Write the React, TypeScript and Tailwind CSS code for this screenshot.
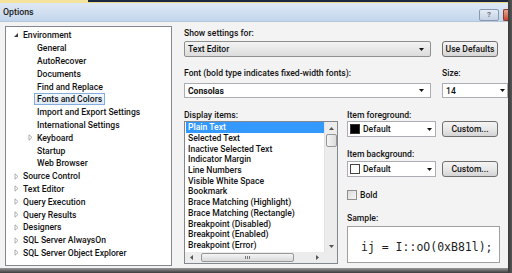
import React from "react";

type TreeItem = { t: string; lvl: number; exp?: "open" | "closed"; sel?: boolean };

const tree: TreeItem[] = [
  { t: "Environment", lvl: 0, exp: "open" },
  { t: "General", lvl: 1 },
  { t: "AutoRecover", lvl: 1 },
  { t: "Documents", lvl: 1 },
  { t: "Find and Replace", lvl: 1 },
  { t: "Fonts and Colors", lvl: 1, sel: true },
  { t: "Import and Export Settings", lvl: 1 },
  { t: "International Settings", lvl: 1 },
  { t: "Keyboard", lvl: 1, exp: "closed" },
  { t: "Startup", lvl: 1 },
  { t: "Web Browser", lvl: 1 },
  { t: "Source Control", lvl: 0, exp: "closed" },
  { t: "Text Editor", lvl: 0, exp: "closed" },
  { t: "Query Execution", lvl: 0, exp: "closed" },
  { t: "Query Results", lvl: 0, exp: "closed" },
  { t: "Designers", lvl: 0, exp: "closed" },
  { t: "SQL Server AlwaysOn", lvl: 0, exp: "closed" },
  { t: "SQL Server Object Explorer", lvl: 0, exp: "closed" },
];

const displayItems = [
  "Plain Text",
  "Selected Text",
  "Inactive Selected Text",
  "Indicator Margin",
  "Line Numbers",
  "Visible White Space",
  "Bookmark",
  "Brace Matching (Highlight)",
  "Brace Matching (Rectangle)",
  "Breakpoint (Disabled)",
  "Breakpoint (Enabled)",
  "Breakpoint (Error)",
];

function Arrow() {
  return (
    <svg width="5" height="3" viewBox="0 0 5 3" className="shrink-0">
      <path d="M0 0h5L2.5 3z" fill="#111" />
    </svg>
  );
}

function Twisty({ exp }: { exp?: "open" | "closed" }) {
  return (
    <span className="w-[8px] h-[8px] flex items-center justify-center shrink-0">
      {exp === "open" && (
        <svg width="6" height="6" viewBox="0 0 6 6">
          <path d="M5 1V5H1z" fill="#3a3a3a" />
        </svg>
      )}
      {exp === "closed" && (
        <svg width="5" height="7" viewBox="0 0 5 7">
          <path d="M1 0.8L4 3.5L1 6.2z" fill="#fff" stroke="#9a9a9a" strokeWidth="0.8" />
        </svg>
      )}
    </span>
  );
}

function Button({ label }: { label: string }) {
  return (
    <div className="w-[56px] h-[16px] flex items-center justify-center border border-[#707070] rounded-[3px] bg-gradient-to-b from-[#f4f4f4] via-[#e8e8e8] to-[#d4d4d4] text-[#111]">
      {label}
    </div>
  );
}

export default function App() {
  return (
    <div className="w-[512px] h-[273px] overflow-hidden flex bg-[#f3f3f3] text-[8.6px] leading-[10px] font-medium text-[#111] [font-family:Roboto,'Noto_Sans',sans-serif]">
      <div className="w-[508px] flex flex-col">
        {/* strip of whatever sits behind the dialog */}
        <div className="h-[3px] flex">
          <div className="w-[88px] bg-[#f4e39c]" />
          <div className="flex-1 bg-[#1c2744] border-b border-[#e8d98a]" />
        </div>

        {/* title bar */}
        <div className="h-[19px] flex items-center pl-[3px] bg-gradient-to-b from-[#dfe9f5] to-[#c3d6ec] border-b border-[#b5c6da]">
          <span className="text-[8.8px] text-[#1a1a1a]">Options</span>
          <div className="ml-auto flex items-center gap-[4px] mt-[6px]">
            <div className="w-[20px] h-[12px] flex items-center justify-center border border-[#8798b2] rounded-[2px] bg-gradient-to-b from-[#e4ecf5] to-[#c5d3e4] text-[8px] font-bold text-[#6e7480]">
              ?
            </div>
            <div className="w-[5px] h-[12px] border border-r-0 border-[#8a3a2a] rounded-l-[2px] bg-gradient-to-b from-[#e9a596] to-[#c4462e]" />
          </div>
        </div>

        {/* body */}
        <div className="flex-1 flex items-start pl-[5px]">
          {/* tree */}
          <div className="mt-[4px] w-[172px] h-[240px] border border-[#828790] bg-white pt-[2px] overflow-hidden">
            {tree.map((it) => (
              <div
                key={it.t}
                className={`h-[12.8px] flex items-center ${it.lvl === 0 ? "pl-[6px]" : "pl-[20px]"}`}
              >
                <Twisty exp={it.exp} />
                <span
                  className={`px-[2px] h-[12px] flex items-center border whitespace-nowrap ${
                    it.sel ? "border-[#84acdd] bg-gradient-to-b from-[#f2f8fe] to-[#dde9f8]" : "border-transparent"
                  }`}
                >
                  {it.t}
                </span>
              </div>
            ))}
          </div>

          {/* settings */}
          <div className="ml-[12px] pt-[6px] flex flex-col">
            <div className="h-[10px]">Show settings for:</div>
            <div className="mt-[3px] h-[16px] flex gap-[11px]">
              <div className="w-[247px] h-full flex items-center justify-between pl-[3px] pr-[6px] border border-[#8e8f8f] rounded-[2px] bg-gradient-to-b from-[#f3f3f3] to-[#dcdcdc]">
                <span>Text Editor</span>
                <Arrow />
              </div>
              <Button label="Use Defaults" />
            </div>

            <div className="mt-[11px] h-[10px] flex">
              <span className="w-[258px]">Font (bold type indicates fixed-width fonts):</span>
              <span>Size:</span>
            </div>
            <div className="mt-[5px] h-[15px] flex gap-[11px]">
              <div className="w-[247px] h-full flex items-center justify-between pl-[3px] pr-[6px] border border-[#abadb3] bg-white">
                <span className="font-bold">Consolas</span>
                <Arrow />
              </div>
              <div className="w-[66px] h-full flex items-center justify-between pl-[3px] pr-[2px] border border-[#abadb3] bg-white">
                <span>14</span>
                <Arrow />
              </div>
            </div>

            <div className="mt-[12px] flex">
              {/* display items */}
              <div className="flex flex-col">
                <div className="h-[10px]">Display items:</div>
                <div className="mt-[1px] w-[154px] h-[143px] border border-[#828790] bg-white flex flex-col">
                  <div className="h-[130px] flex">
                    <div className="flex-1 pl-[1px] overflow-hidden">
                      {displayItems.map((d, i) => (
                        <div
                          key={d}
                          className={`h-[10.7px] flex items-center pl-[2px] whitespace-nowrap ${
                            i === 0 ? "bg-[#3399ff] text-white" : ""
                          }`}
                        >
                          {d}
                        </div>
                      ))}
                    </div>
                    <div className="w-[13px] bg-[#ececec] border-l border-[#e2e2e2] flex flex-col items-center">
                      <div className="h-[12px] w-full flex items-center justify-center">
                        <svg width="5" height="3" viewBox="0 0 5 3">
                          <path d="M0 3h5L2.5 0z" fill="#555" />
                        </svg>
                      </div>
                      <div className="h-[13px] w-[11px] border border-[#979797] rounded-[2px] bg-gradient-to-r from-[#f5f5f5] to-[#dcdcdc]" />
                      <div className="mt-auto h-[12px] w-full flex items-center justify-center">
                        <svg width="5" height="3" viewBox="0 0 5 3">
                          <path d="M0 0h5L2.5 3z" fill="#555" />
                        </svg>
                      </div>
                    </div>
                  </div>
                  <div className="h-[11px] flex">
                    <div className="flex-1 bg-[#ececec] flex items-center pl-[5px] pr-[4px]">
                      <svg width="3" height="5" viewBox="0 0 3 5">
                        <path d="M3 0v5L0 2.5z" fill="#555" />
                      </svg>
                      <div className="ml-[8px] w-[93px] h-[9px] border border-[#979797] rounded-[2px] bg-gradient-to-b from-[#f5f5f5] to-[#d9d9d9] flex items-center justify-center gap-[1px]">
                        <span className="w-px h-[3px] bg-[#777]" />
                        <span className="w-px h-[3px] bg-[#777]" />
                        <span className="w-px h-[3px] bg-[#777]" />
                      </div>
                      <svg width="3" height="5" viewBox="0 0 3 5" className="ml-auto mr-[1px]">
                        <path d="M0 0v5L3 2.5z" fill="#555" />
                      </svg>
                    </div>
                    <div className="w-[13px] bg-[#ececec]" />
                  </div>
                </div>
              </div>

              {/* colour pickers */}
              <div className="ml-[9px] flex flex-col">
                <div className="h-[10px]">Item foreground:</div>
                <div className="mt-[1px] h-[16px] flex gap-[6px]">
                  <div className="w-[89px] h-full flex items-center pl-[2px] pr-[3px] border border-[#abadb3] bg-white">
                    <span className="w-[10px] h-[10px] bg-black border border-[#333]" />
                    <span className="ml-[3px]">Default</span>
                    <span className="ml-auto">
                      <Arrow />
                    </span>
                  </div>
                  <Button label="Custom..." />
                </div>

                <div className="mt-[12px] h-[10px]">Item background:</div>
                <div className="mt-[2px] h-[16px] flex gap-[6px]">
                  <div className="w-[89px] h-full flex items-center pl-[2px] pr-[3px] border border-[#abadb3] bg-white">
                    <span className="w-[10px] h-[10px] bg-white border border-[#444]" />
                    <span className="ml-[3px]">Default</span>
                    <span className="ml-auto">
                      <Arrow />
                    </span>
                  </div>
                  <Button label="Custom..." />
                </div>

                <div className="mt-[13px] h-[10px] flex items-center">
                  <span className="w-[10px] h-[10px] border border-[#8f8f8f] bg-gradient-to-br from-[#dcdcdc] to-[#f6f6f6]" />
                  <span className="ml-[3px]">Bold</span>
                </div>

                <div className="mt-[13px] h-[10px]">Sample:</div>
                <div className="mt-[3px] w-[153px] h-[37px] border border-[#a0a0a0] bg-white flex items-center pl-[13px] pt-[4px]">
                  <span className="text-[11.5px] font-normal text-[#1e1e1e] whitespace-nowrap [font-family:'DejaVu_Sans_Mono',monospace]">
                    ij = I::oO(0xB81l);
                  </span>
                </div>
              </div>
            </div>
          </div>
        </div>

        <div className="h-[5px] bg-gradient-to-b from-[#9a9a9a] to-[#3c3c3c]" />
      </div>
      <div className="w-[4px] bg-gradient-to-r from-[#3a3a3a] to-[#555]" />
    </div>
  );
}
